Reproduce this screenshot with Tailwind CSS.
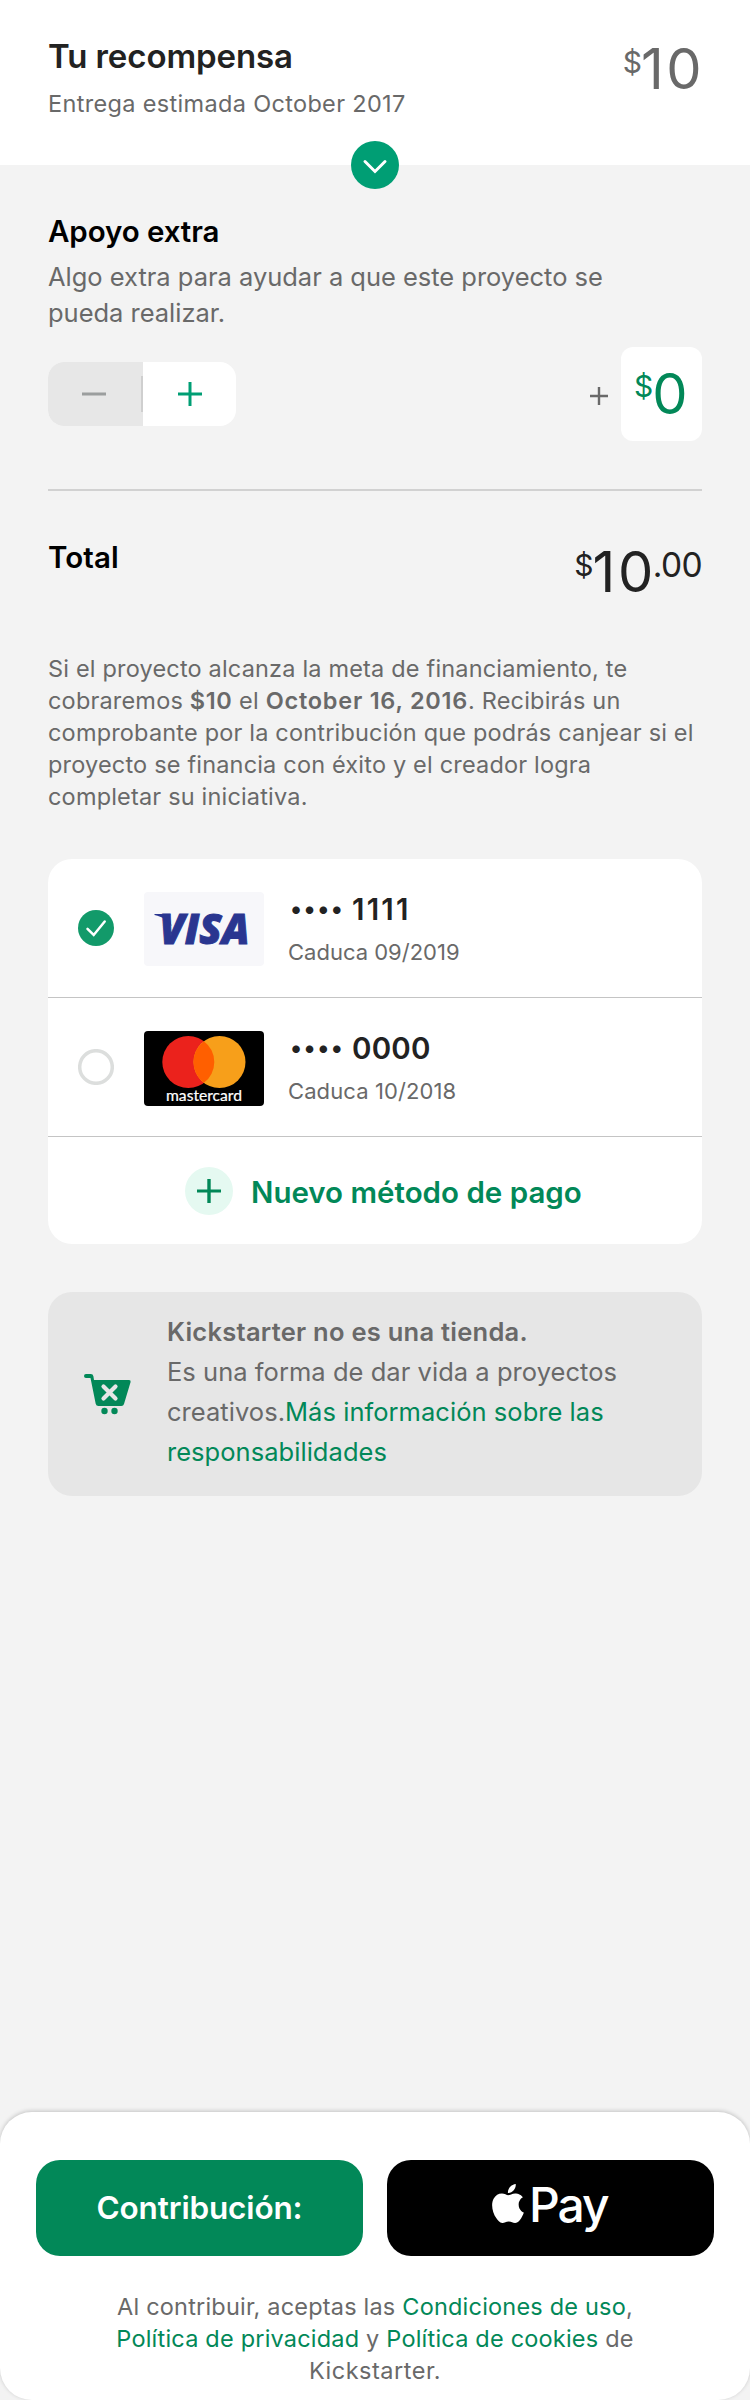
<!DOCTYPE html>
<html lang="es">
<head>
<meta charset="utf-8">
<title>Contribución</title>
<script src="https://cdn.jsdelivr.net/npm/@tailwindcss/browser@4"></script>
</head>
<body class="flex h-[2400px] w-[750px] flex-col overflow-x-hidden bg-[#f3f3f3] font-['Inter',sans-serif] whitespace-nowrap text-[#696969]">

  <!-- Reward summary -->
  <header class="relative flex h-[165px] shrink-0 items-start justify-between bg-white px-12 pt-9">
    <div>
      <h1 class="text-[33px] leading-10 font-semibold tracking-[-0.1px] text-[#222]">Tu recompensa</h1>
      <p class="mt-3 text-[23.5px] leading-8 tracking-[0.33px]">Entrega estimada October 2017</p>
    </div>
    <div class="mt-[5px] -mr-[2px] flex items-start">
      <span class="mt-[5px] text-[30px] leading-8">$</span>
      <span class="-ml-px text-[56px] leading-14 tracking-[2.5px]">10</span>
    </div>
    <button class="absolute top-[141px] left-[351px] flex size-12 items-center justify-center rounded-full bg-[#009e74]">
      <svg class="size-12" viewBox="0 0 48 48" fill="none" stroke="#fff" stroke-width="3" stroke-linecap="round" stroke-linejoin="miter"><path d="M14 20.500 24 30.500 34 20.500"/></svg>
    </button>
  </header>

  <main class="px-12">
    <!-- Bonus support -->
    <section class="pt-[48px]">
      <h2 class="text-[29.5px] leading-9 font-semibold tracking-[-0.09px] text-black">Apoyo extra</h2>
      <p class="mt-[10px] text-[25.5px] leading-9 tracking-[-0.02px]">Algo extra para ayudar a que este proyecto se<br>pueda realizar.</p>
      <div class="mt-4 flex h-[94px] items-center justify-between">
        <div class="flex h-16 w-[188px] overflow-hidden rounded-2xl bg-white">
          <button class="flex w-[95px] items-center justify-end bg-[#e7e7e7]">
            <svg class="mr-[35px] h-1 w-6" viewBox="0 0 24 4"><path d="M0 .5h24v3H0z" fill="#9b9e9e"/></svg>
            <span class="h-9 w-0.5 bg-[#cfcfcf]"></span>
          </button>
          <button class="flex flex-1 items-center justify-center">
            <svg class="size-6" viewBox="0 0 24 24"><path d="M10.500 0h3v10.500H24v3H13.500V24h-3V13.500H0v-3h10.500z" fill="#009e74"/></svg>
          </button>
        </div>
        <div class="flex items-center">
          <svg class="mt-1 mr-[13px] size-[18px]" viewBox="0 0 18 18"><path d="M7.800 0h2.400v7.800H18v2.400h-7.800V18H7.800v-7.800H0V7.800h7.800z" fill="#696969"/></svg>
          <div class="flex h-[94px] w-[81px] items-start rounded-xl bg-white pt-[19px] pl-[13px] text-[#028858]">
            <span class="mt-[4px] text-[30px] leading-8">$</span>
            <span class="-ml-px text-[56px] leading-14">0</span>
          </div>
        </div>
      </div>
    </section>

    <!-- Total -->
    <section class="mt-[48px] flex h-[164px] items-start justify-between border-t-2 border-[#d1d1d1] pt-12">
      <h2 class="text-[29.5px] leading-9 font-semibold tracking-[0.09px] text-black">Total</h2>
      <div class="mt-[5px] flex items-start text-[#222]">
        <span class="mt-[5px] text-[30px] leading-8">$</span>
        <span class="-ml-px text-[56px] leading-14 tracking-[2.5px]">10</span>
        <span class="mt-[5px] -ml-[3px] text-[33.5px] leading-8 tracking-[-0.6px]">.00</span>
      </div>
    </section>

    <p class="text-[23.5px] leading-8 tracking-[0.18px]">Si el proyecto alcanza la meta de financiamiento, te<br>cobraremos <b class="font-semibold tracking-[0.6px]">$10</b> el <b class="font-semibold tracking-[0.76px]">October 16, 2016</b>. Recibirás un<br>comprobante por la contribución que podrás canjear si el<br>proyecto se financia con éxito y el creador logra<br>completar su iniciativa.</p>

    <!-- Payment methods -->
    <section class="mt-[46px] overflow-hidden rounded-3xl bg-white">
      <div class="flex h-[139px] items-start border-b border-[#c4c4c4] pl-[30px]">
        <svg class="mt-[51px] size-9" viewBox="0 0 36 36" fill="none"><circle cx="18" cy="18" r="18" fill="#129a6a"/><path d="M9.500 18.800 15.700 25 26.700 11.500" stroke="#fff" stroke-width="2.500" stroke-linecap="round"/></svg>
        <svg class="mt-[33px] ml-[30px] h-[74px] w-[120px] rounded" viewBox="0 0 120 74">
          <path d="M0 0h120v74H0z" fill="#f7f7fa"/>
          <text x="15.500" y="52" textLength="90" lengthAdjust="spacingAndGlyphs" fill="#2a3690" stroke="#2a3690" stroke-width="1" font-family="Open Sans" font-weight="800" font-style="italic" font-size="42">VISA</text>
          <path d="M10.500 22H22c2 0 3 1 3.500 3l2 9c-3-5-9-9.500-17-11z" fill="#2a3690"/>
        </svg>
        <div class="mt-8 ml-6">
          <p class="flex h-9 text-[29.5px] leading-9 font-semibold text-[#222]"><span class="w-[64px] pl-[2px] text-[24px] tracking-[1.5px]">••••</span><span class="tracking-[2.2px]">1111</span></p>
          <p class="mt-[11px] text-[22px] leading-7">Caduca 09/2019</p>
        </div>
      </div>
      <div class="flex h-[139px] items-start border-b border-[#c4c4c4] pl-[30px]">
        <svg class="mt-[51px] size-9" viewBox="0 0 36 36" fill="none"><circle cx="18" cy="18" r="16.300" stroke="#dcdedd" stroke-width="3.500"/></svg>
        <svg class="mt-[33px] ml-[30px] h-[75px] w-[120px] rounded" viewBox="0 0 120 75">
          <path d="M0 0h120v75H0z"/>
          <circle cx="44.300" cy="31" r="26" fill="#eb221c"/>
          <circle cx="75.500" cy="31" r="26" fill="#f79f1a"/>
          <path d="M59.900 10.200a26 26 0 0 1 0 41.600a26 26 0 0 1 0-41.600z" fill="#ff5f00"/>
          <text x="22" y="70" textLength="76" lengthAdjust="spacingAndGlyphs" fill="#fff" stroke="#fff" stroke-width=".2" font-family="Lato" font-weight="400" font-size="15">mastercard</text>
        </svg>
        <div class="mt-8 ml-6">
          <p class="flex h-9 text-[29.5px] leading-9 font-semibold text-[#222]"><span class="w-[64px] pl-[2px] text-[24px] tracking-[1.5px]">••••</span><span class="tracking-[0.2px]">0000</span></p>
          <p class="mt-[11px] text-[22px] leading-7 tracking-[0.1px]">Caduca 10/2018</p>
        </div>
      </div>
      <button class="flex h-[107px] w-full items-start pt-[30px] pl-[137px]">
        <svg class="size-12" viewBox="0 0 48 48"><circle cx="24" cy="24" r="24" fill="#e5f9f1"/><path d="M22.300 12h3.400v10.500H36v3H25.700V36h-3.400V25.500H12v-3h10.300z" fill="#028858"/></svg>
        <span class="mt-[7px] ml-[18px] text-[29.5px] leading-9 font-semibold text-[#028858]">Nuevo método de pago</span>
      </button>
    </section>

    <!-- Disclaimer -->
    <section class="mt-12 flex h-[204px] rounded-3xl bg-[#e6e6e6] pt-5">
      <svg class="mt-[61px] ml-9 h-[42px] w-[48px]" viewBox="0 0 48 42">
        <path d="M2 1H6.800q2.200 0 2.600 2.200L10 7H45q2 0 1.600 2L40 31q-.6 2-2.600 2H14.500q-2.300 0-2.800-2.200L6.500 5H2A2 2 0 0 1 2 1z" fill="#028858"/>
        <path d="m19.500 13.500 12 12m0-12-12 12" stroke="#e6e6e6" stroke-width="4.200" stroke-linecap="round"/>
        <circle cx="20.500" cy="38" r="3.200" fill="#028858"/><circle cx="30.500" cy="38" r="3.200" fill="#028858"/>
      </svg>
      <p class="ml-[35px] text-[25.5px] leading-10 tracking-[0.04px]"><b class="font-semibold tracking-[0.26px]">Kickstarter no es una tienda.</b><br>Es una forma de dar vida a proyectos<br>creativos.<a class="text-[#028858]">Más información sobre las<br>responsabilidades</a></p>
    </section>
  </main>

  <!-- Call to action -->
  <footer class="mt-auto h-[288px] shrink-0 rounded-[32px] bg-white px-9 pt-12 shadow-[0_-1px_4px_rgba(0,0,0,0.2)]">
    <div class="flex h-24 gap-6">
      <button class="w-[327px] rounded-3xl bg-[#028858] text-[31.5px] font-semibold tracking-[-0.15px] text-white">Contribución:</button>
      <button class="flex w-[327px] items-start rounded-3xl bg-black pl-[105px] text-white">
        <svg class="mt-6 h-[39px] w-8" viewBox="2.150 0 19.700 24" preserveAspectRatio="none" fill="#fff"><path d="M12.152 6.896c-.948 0-2.415-1.078-3.960-1.040-2.040.027-3.910 1.183-4.961 3.014-2.117 3.675-.546 9.103 1.519 12.090 1.013 1.454 2.208 3.090 3.792 3.039 1.520-.065 2.090-.987 3.935-.987 1.831 0 2.350.987 3.960.948 1.637-.026 2.676-1.480 3.676-2.948 1.156-1.688 1.636-3.325 1.662-3.415-.039-.013-3.182-1.221-3.220-4.857-.026-3.040 2.480-4.494 2.597-4.559-1.429-2.090-3.623-2.324-4.390-2.376-2-.156-3.675 1.090-4.610 1.090zM15.530 3.830c.843-1.012 1.400-2.427 1.245-3.830-1.207.052-2.662.805-3.532 1.818-.780.896-1.454 2.338-1.273 3.714 1.338.104 2.715-.688 3.559-1.701"/></svg>
        <span class="mt-[17px] ml-[5px] text-[48px] leading-14 font-medium tracking-[-2.1px]">Pay</span>
      </button>
    </div>
    <p class="mt-[35px] text-center text-[23.5px] leading-8 tracking-[0.2px]">Al contribuir, aceptas las <a class="text-[#028858]">Condiciones de uso</a>,<br><a class="text-[#028858]">Política de privacidad</a> y <a class="text-[#028858]">Política de cookies</a> de<br><span class="tracking-[0.5px]">Kickstarter.</span></p>
  </footer>
</body>
</html>
